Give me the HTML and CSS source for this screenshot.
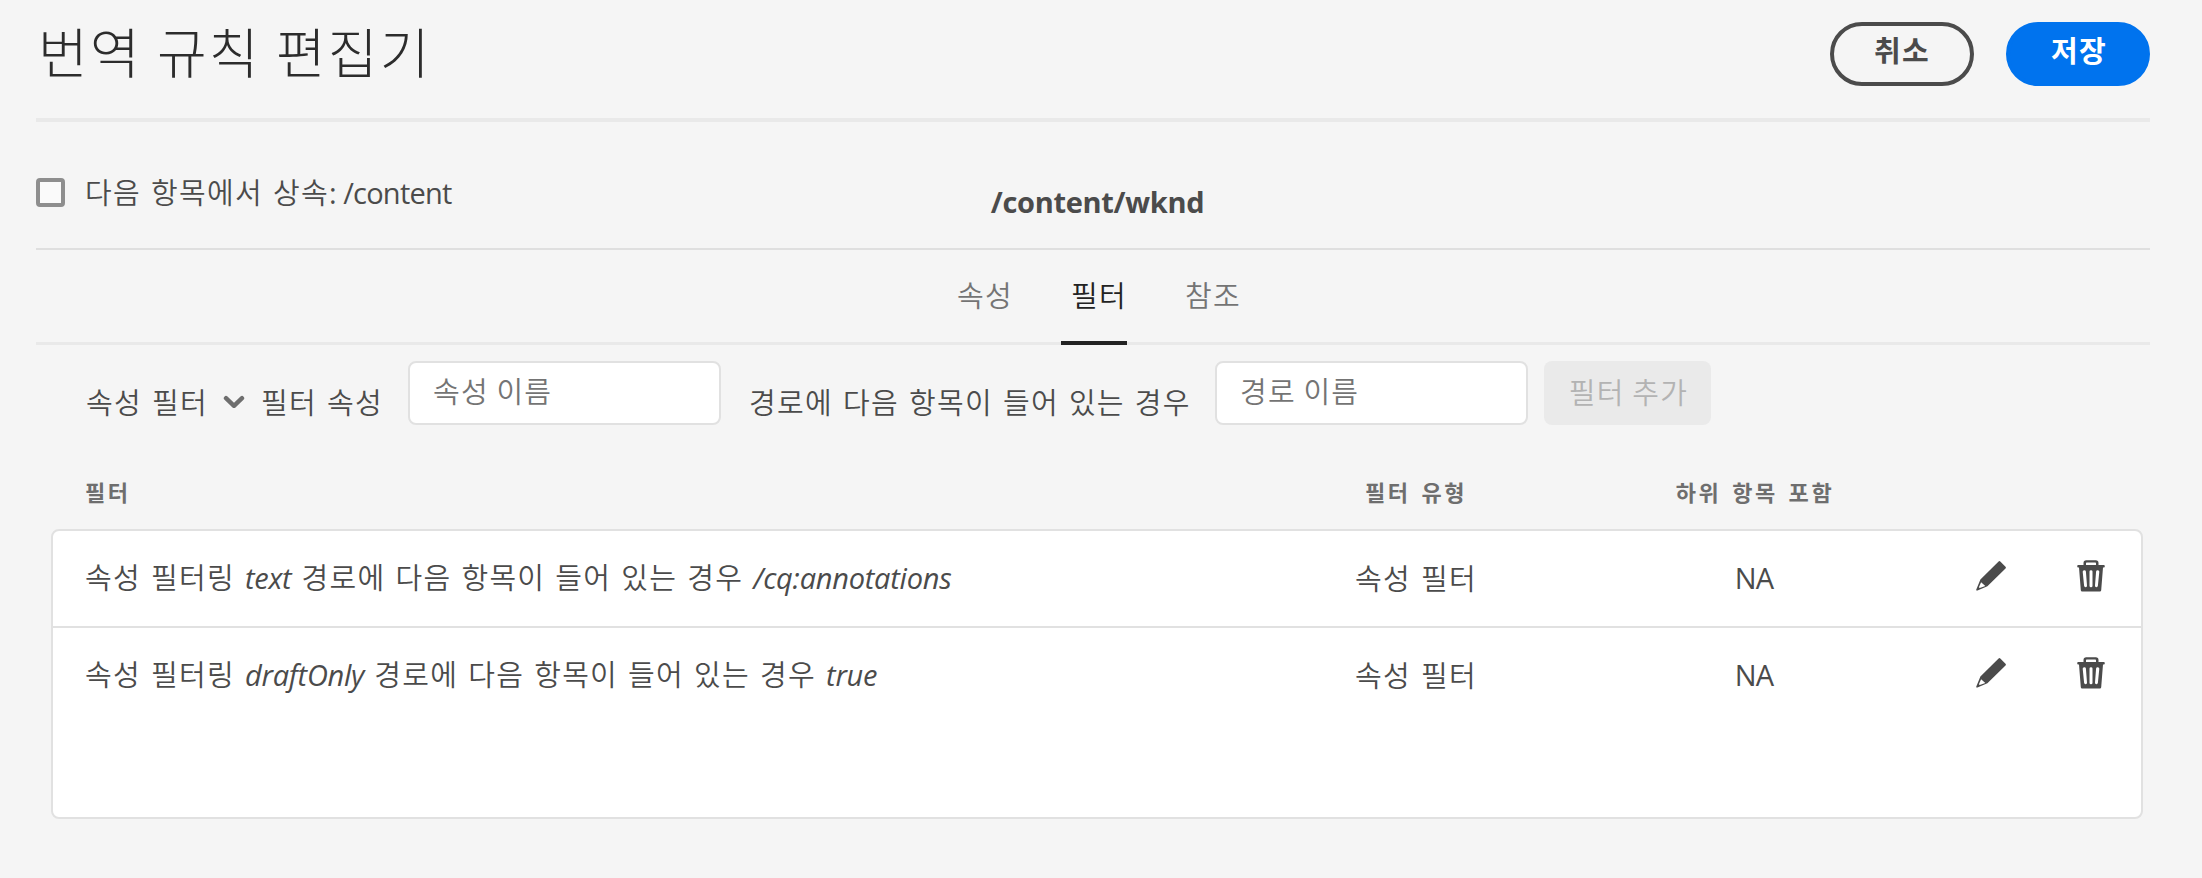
FILE: index.html
```html
<!DOCTYPE html>
<html lang="ko">
<head>
<meta charset="utf-8">
<title>번역 규칙 편집기</title>
<link rel="stylesheet" href="styles.css">
</head>
<body>
<svg class="sprite" aria-hidden="true">
  <symbol id="pencil" viewBox="0 0 30 30">
    <path fill-rule="evenodd" d="M22.6 .5a1.2 1.2 0 0 1 1.7 0l5.2 5.2a1.2 1.2 0 0 1 0 1.7L11.4 25.3 1.5 29.5Q-.1 30 .3 28.400L4.400 18.600ZM5.100 21.300 2.900 26.200 3.700 27 9.300 25.100Z"/>
  </symbol>
  <symbol id="trash" viewBox="0 0 28 32">
    <path fill-rule="evenodd" d="M6.500 5V3Q6.500 .3 9.200 .3h9.600Q21.500 .3 21.500 3v2h5.300q1 0 1 1.200t-1 1.200H26L24.200 30.200q-.1 1.200-1.300 1.200H5.100q-1.200 0-1.300-1.200L2 7.400H1.200q-1 0-1-1.200T1.200 5ZM9 5h10V3.200q0-.7-.7-.7H9.700Q9 2.500 9 3.200ZM5.700 11.700 7.100 25.800q.2 1.500 1.600 1.400 1.400-.1 1.300-1.600L8.900 11.500q-.2-1.400-1.700-1.300-1.600.1-1.500 1.500ZM12.500 11.600v14.100q0 1.500 1.500 1.500t1.500-1.500V11.600q0-1.400-1.500-1.400t-1.500 1.400ZM19.100 11.500 18 25.600q-.1 1.500 1.300 1.600 1.400.1 1.600-1.400l1.400-14.100q.1-1.400-1.500-1.500-1.500-.1-1.700 1.300Z"/>
  </symbol>
</svg>

<header class="header">
  <h1 class="title">번역 규칙 편집기</h1>
  <div class="actions">
    <button class="btn btn-outline">취소</button>
    <button class="btn btn-primary">저장</button>
  </div>
</header>

<section class="context">
  <label class="inherit">
    <span class="box"></span>
    <span>다음 항목에서 상속<span class="latin">: /content</span></span>
  </label>
  <h2 class="path">/content/wknd</h2>
</section>

<nav class="tabs">
  <a class="tab">속성</a>
  <a class="tab active">필터</a>
  <a class="tab">참조</a>
</nav>

<section class="filter-bar">
  <span class="label select">속성 필터</span>
  <svg class="chevron" viewBox="0 0 22 14"><path d="M3 3.200 11 10.800 19 3.200"/></svg>
  <span class="label property">필터 속성</span>
  <input class="field first" placeholder="속성 이름">
  <span class="label contains">경로에 다음 항목이 들어 있는 경우</span>
  <input class="field" placeholder="경로 이름">
  <button class="add" disabled>필터 추가</button>
</section>

<div class="grid head">
  <span>필터</span>
  <span class="center">필터 유형</span>
  <span class="center">하위 항목 포함</span>
</div>

<section class="table">
  <div class="grid row">
    <span>속성 필터링 <em>text</em> 경로에 다음 항목이 들어 있는 경우 <em>/cq:annotations</em></span>
    <span class="center">속성 필터</span>
    <span class="center latin na">NA</span>
    <svg class="icon pencil"><use href="#pencil"/></svg>
    <svg class="icon trash"><use href="#trash"/></svg>
  </div>
  <div class="grid row">
    <span>속성 필터링 <em>draftOnly</em> 경로에 다음 항목이 들어 있는 경우 <em>true</em></span>
    <span class="center">속성 필터</span>
    <span class="center latin na">NA</span>
    <svg class="icon pencil"><use href="#pencil"/></svg>
    <svg class="icon trash"><use href="#trash"/></svg>
  </div>
</section>
</body>
</html>
```

FILE: styles.css
```css
* { box-sizing: border-box; }

body {
  margin: 0;
  padding: 0 52px 0 36px;
  height: 878px;
  overflow: hidden;
  background: #f5f5f5;
  color: #4b4b4b;
  font: 350 29px/40px "Noto Sans CJK KR", sans-serif;
  letter-spacing: 1.3px;
  word-spacing: 0.6px;
}

.sprite { display: none; }

.latin, em {
  font-family: "Open Sans", "Noto Sans CJK KR", sans-serif;
  font-weight: 400;
  letter-spacing: -0.75px;
}

em { letter-spacing: -0.25px; }

.header {
  display: flex;
  justify-content: space-between;
  height: 122px;
  padding-top: 22px;
  border-bottom: 4px solid #e9e9e9;
}

.title {
  margin: -1px 0 0 2px;
  font-size: 54px;
  font-weight: 300;
  line-height: 60px;
  letter-spacing: 2.3px;
  word-spacing: -2.5px;
  color: #2c2c2c;
}

.actions { display: flex; gap: 32px; }

.btn {
  width: 144px;
  height: 64px;
  padding: 0 0 11px;
  border: 4px solid #4b4b4b;
  border-radius: 32px;
  background: none;
  color: #4b4b4b;
  font: 700 29px/40px "Noto Sans CJK KR", sans-serif;
  letter-spacing: 1.3px;
}

.btn-primary {
  padding-left: 2px;
  border-color: #0073ee;
  background: #0073ee;
  color: #fff;
}

.context {
  display: grid;
  grid-template-columns: 1fr auto 1fr;
  height: 128px;
  border-bottom: 2px solid #dfdfdf;
}

.inherit {
  display: flex;
  align-items: center;
  gap: 20px;
  height: 40px;
  margin-top: 50px;
}

.box {
  width: 29px;
  height: 29px;
  border: 4px solid #8e8e8e;
  border-radius: 4px;
  background: #fafafa;
}

.path {
  margin: 60px 0 0 9px;
  font: 700 29px/40px "Open Sans", sans-serif;
  letter-spacing: -0.3px;
}

.tabs {
  display: flex;
  justify-content: center;
  gap: 48px;
  height: 95px;
  padding: 24px 0 0 2px;
  border-bottom: 3px solid #e9e9e9;
}

.tab {
  height: 71px;
  padding: 0 0 0 10px;
  color: #747474;
}

.active {
  border-bottom: 4px solid #222;
  color: #222;
}

.filter-bar {
  display: flex;
  align-items: center;
  height: 64px;
  margin: 16px 0 0 50px;
}

.label { padding-top: 16px; white-space: nowrap; }
.select { width: 137px; }
.property { width: 147px; }
.contains { width: 466px; }

.chevron {
  width: 22px;
  height: 14px;
  margin: 17px 16px 0 0;
  fill: none;
  stroke: #6e6e6e;
  stroke-width: 4.400;
  stroke-linecap: round;
  stroke-linejoin: round;
}

.field {
  width: 313px;
  height: 64px;
  padding: 0 23px 7px;
  border: 2px solid #e1e1e1;
  border-radius: 8px;
  background: #fff;
  font: inherit;
  letter-spacing: 1.3px;
  word-spacing: -2px;
}

.field.first { margin-right: 28px; }
.field::placeholder { color: #747474; opacity: 1; }

.add {
  width: 167px;
  height: 64px;
  margin-left: 16px;
  padding: 0 0 4px 2px;
  border: 0;
  border-radius: 8px;
  background: #eaeaea;
  color: #b3b3b3;
  font: inherit;
  letter-spacing: 1.3px;
  word-spacing: -2px;
}

.grid {
  display: grid;
  grid-template-columns: 1131px 400px 278px 183px 29px;
  align-items: center;
}

.center { text-align: center; }

.head {
  height: 40px;
  margin: 46px 0 0 49px;
  color: #6e6e6e;
  font-size: 22px;
  font-weight: 700;
  letter-spacing: 2.6px;
  word-spacing: 2px;
}

.table {
  width: 2092px;
  height: 290px;
  margin: 18px 0 0 15px;
  border: 2px solid #e1e1e1;
  border-radius: 8px;
  background: #fff;
}

.row {
  height: 95px;
  padding: 0 0 5px 32px;
}

.row > span { padding-top: 2px; }
.row > .na { padding: 3px 2px 0 0; }

.row:first-child { height: 97px; border-bottom: 2px solid #e1e1e1; }

.icon { fill: #4b4b4b; }
.pencil { width: 30px; height: 30px; margin-left: 82px; }
.trash { width: 28px; height: 32px; }
```
